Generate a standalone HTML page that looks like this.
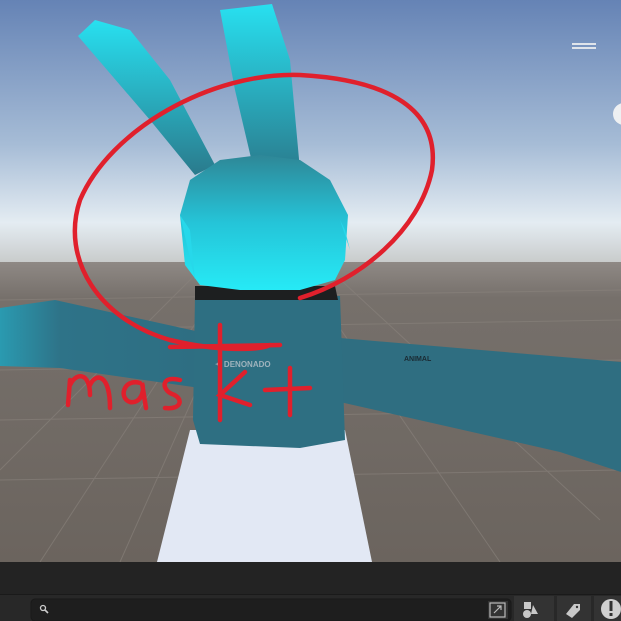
<!DOCTYPE html>
<html><head><meta charset="utf-8"><style>
html,body{margin:0;padding:0;width:621px;height:621px;overflow:hidden;background:#232323;font-family:"Liberation Sans",sans-serif}
</style></head><body>
<svg width="621" height="621" viewBox="0 0 621 621" xmlns="http://www.w3.org/2000/svg">
<defs>
<linearGradient id="sky" x1="0" y1="0" x2="0" y2="1">
<stop offset="0" stop-color="#6583b5"/><stop offset="0.55" stop-color="#a6bcd6"/><stop offset="0.85" stop-color="#e4ecf2"/><stop offset="1" stop-color="#c9cccc"/>
</linearGradient>
<linearGradient id="gnd" x1="0" y1="0" x2="0" y2="1">
<stop offset="0" stop-color="#8f8985"/><stop offset="0.12" stop-color="#76706b"/><stop offset="1" stop-color="#6b645e"/>
</linearGradient>
<linearGradient id="head" x1="0" y1="0" x2="0" y2="1">
<stop offset="0" stop-color="#2e8797"/><stop offset="0.5" stop-color="#25c4d8"/><stop offset="1" stop-color="#26eaf6"/>
</linearGradient>
<linearGradient id="ear" x1="0" y1="0" x2="0" y2="1">
<stop offset="0" stop-color="#28e0f0"/><stop offset="1" stop-color="#2a7a8c"/>
</linearGradient>
<linearGradient id="arm" x1="0" y1="0" x2="1" y2="0">
<stop offset="0" stop-color="#2a9ab0"/><stop offset="0.3" stop-color="#2e7388"/><stop offset="1" stop-color="#2e6e82"/>
</linearGradient>
</defs>
<rect x="0" y="0" width="621" height="262" fill="url(#sky)"/>
<rect x="0" y="262" width="621" height="300" fill="url(#gnd)"/>
<g stroke="#8a837d" stroke-width="1" opacity="0.6" fill="none">
<path d="M0 300 L621 290 M0 330 L621 320 M0 370 L621 360 M0 420 L621 410 M0 480 L621 470"/>
<path d="M120 562 L250 270 M40 562 L230 270 M500 562 L300 270 M600 520 L330 270 M0 470 L200 270"/>
</g>
<rect x="572" y="43" width="24" height="2" fill="#dfe4ea"/><rect x="572" y="47" width="24" height="2" fill="#dfe4ea"/>
<circle cx="624" cy="114" r="11" fill="#eef0f2"/>
<!-- skirt -->
<path d="M190 430 L345 430 L372 562 L157 562 Z" fill="#e2e8f4"/>
<!-- arms -->
<path d="M0 308 L55 300 L200 332 L200 388 L60 368 L0 366 Z" fill="url(#arm)"/>
<path d="M340 338 L621 362 L621 472 L560 452 L340 402 Z" fill="#2f6e81"/>
<!-- torso -->
<path d="M195 296 L340 296 L345 440 L300 448 L200 444 L193 420 Z" fill="#2e6f82"/>
<text x="215" y="367" font-size="8" fill="#9fb3bd" font-weight="bold">✦ DENONADO</text>
<text x="404" y="361" font-size="7" fill="#1a2a33" font-weight="bold">ANIMAL</text>
<!-- neck -->
<path d="M195 286 L335 286 L338 300 L195 300 Z" fill="#1d1f20"/>
<!-- ears -->
<path d="M78 36 L95 20 L130 30 L170 80 L215 165 L195 175 L150 120 Z" fill="url(#ear)"/>
<path d="M220 10 L272 4 L290 60 L300 170 L255 175 L235 90 Z" fill="url(#ear)"/>
<!-- head -->
<path d="M180 215 L190 180 L220 160 L260 155 L300 160 L330 180 L348 215 L345 260 L335 280 L300 290 L240 290 L200 285 L185 265 Z" fill="url(#head)"/>
<path d="M180 215 L195 280 L190 230 Z M340 220 L350 250 L345 230 Z" fill="#27d8ea"/>
<!-- red annotation -->
<g fill="none" stroke="#e0202c" stroke-width="4.5" stroke-linecap="round">
<path d="M300 298 C360 280 420 230 432 170 C440 110 390 80 300 75 C210 72 110 130 80 200 C60 260 100 320 170 340 C220 352 260 350 270 345"/>
<path d="M68 405 L70 380 M70 385 C76 372 90 372 90 395 M90 385 C96 372 110 374 110 408"/>
<path d="M140 383 C124 378 118 398 130 402 C140 404 145 392 142 383 L146 408"/>
<path d="M180 380 C160 375 162 390 172 394 C184 398 182 410 165 408"/>
<path d="M220 325 L220 420 M245 372 L220 395 L250 405"/>
<path d="M265 390 L310 388 M290 368 L290 415"/>
<path d="M170 347 L280 345"/>
</g>
<!-- toolbar -->
<rect x="0" y="562" width="621" height="32" fill="#232323"/>
<rect x="0" y="594" width="621" height="27" fill="#282828"/>
<rect x="0" y="594" width="621" height="1" fill="#1a1a1a"/>
<rect x="31" y="599" width="480" height="22" rx="4" fill="#1e1e1e" stroke="#191919"/>
<circle cx="43" cy="608" r="2.5" fill="none" stroke="#ccc" stroke-width="1.3"/>
<path d="M45 610 L48 613" stroke="#ccc" stroke-width="1.6"/>
<rect x="488" y="601" width="20" height="18" fill="#333"/>
<rect x="490" y="603" width="15" height="14" fill="none" stroke="#bbb" stroke-width="1.2"/>
<path d="M494 613 L501 606 M497 606 L501 606 L501 610" stroke="#bbb" stroke-width="1.2" fill="none"/>
<rect x="514" y="596" width="40" height="25" fill="#333"/>
<rect x="524" y="602" width="7" height="7" fill="#c8c8c8"/><circle cx="527" cy="614" r="4" fill="#c8c8c8"/><path d="M533 605 L538 614 L531 614 Z" fill="#c8c8c8"/>
<rect x="557" y="596" width="34" height="25" fill="#333"/>
<path d="M566 614 L574 604 L580 604 L580 610 L572 618 Z" fill="#c8c8c8"/><circle cx="577" cy="607" r="1.2" fill="#333"/>
<rect x="594" y="596" width="27" height="25" fill="#333"/>
<circle cx="611" cy="609" r="10" fill="#d0d0d0"/><rect x="609.5" y="601" width="3" height="10" fill="#333"/><rect x="609.5" y="613" width="3" height="3" fill="#333"/>
</svg>
</body></html>
